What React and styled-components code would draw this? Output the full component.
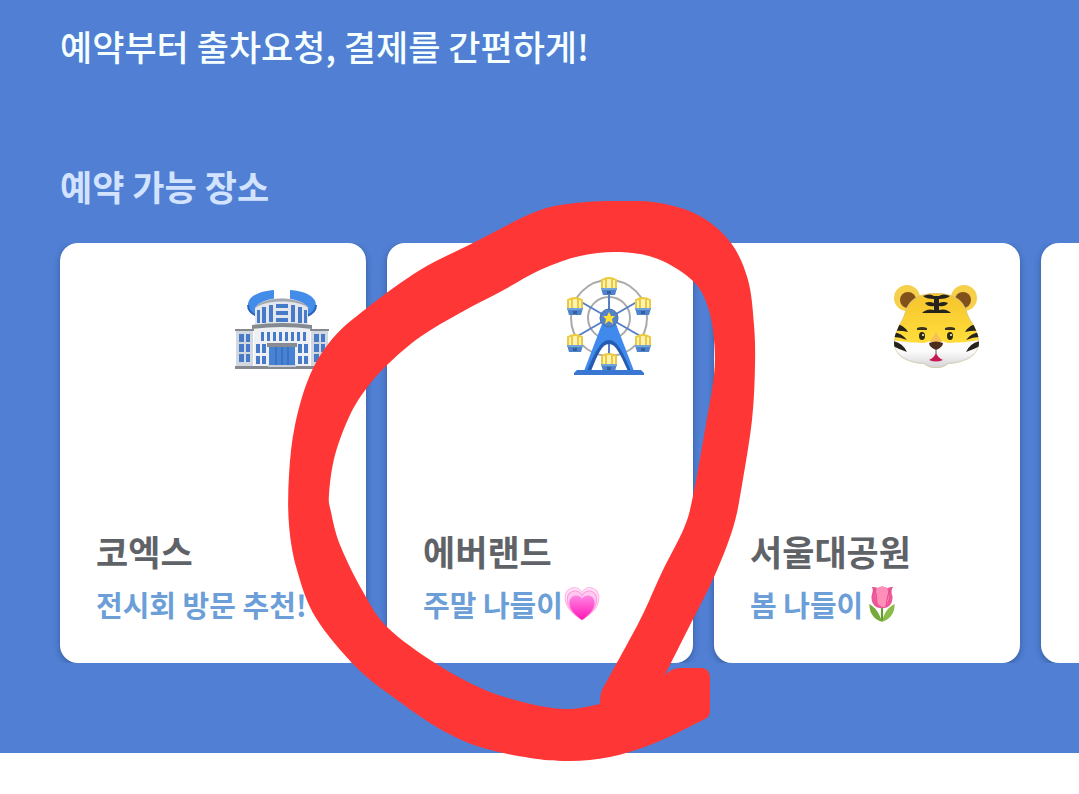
import React from "react";
import styled, { createGlobalStyle } from "styled-components";

const GlobalStyle = createGlobalStyle`
  *, *::before, *::after { box-sizing: border-box; }
  body {
    margin: 0;
    background: #ffffff;
    font-family: "Noto Sans CJK KR", "Noto Sans", sans-serif;
  }
`;

const Page = styled.main`
  position: relative;
  min-height: 100vh;
  overflow-x: clip;
`;

const Hero = styled.section`
  background: #507fd3;
  padding: 22px 0 90px;
`;

const Lead = styled.p`
  margin: 0;
  padding: 0 60px;
  font-size: 35px;
  line-height: 48px;
  font-weight: 500;
  color: #f5ffff;
`;

const Heading = styled.h2`
  margin: 92px 0 33px;
  padding: 0 60px;
  font-size: 35px;
  line-height: 48px;
  font-weight: 700;
  color: #d2e3ff;
`;

const CardList = styled.ul`
  display: flex;
  gap: 21px;
  margin: 0;
  padding: 0 0 0 60px;
  list-style: none;
  overflow: hidden;
`;

const CardItem = styled.li`
  flex: 0 0 306px;
`;

const Card = styled.a`
  display: flex;
  flex-direction: column;
  justify-content: space-between;
  min-height: 420px;
  padding: 34px 34px 35px 36px;
  border-radius: 18px;
  background: #ffffff;
  box-shadow: 0 2px 6px rgba(20, 40, 80, 0.4);
  text-decoration: none;
`;

const Picture = styled.svg`
  width: 100px;
  height: 100px;
  align-self: flex-end;
`;

const PlaceName = styled.strong`
  display: block;
  font-size: 35px;
  line-height: 58px;
  font-weight: 700;
  color: #5f6368;
  white-space: nowrap;
`;

const PlaceNote = styled.span`
  display: flex;
  align-items: center;
  font-size: 29px;
  line-height: 48px;
  font-weight: 700;
  color: #6c9fd8;
  white-space: nowrap;
`;

const Emoji = styled.svg`
  width: 38px;
  height: 38px;
`;

const Marker = styled.svg`
  position: absolute;
  top: 0;
  left: 0;
  width: 770px;
  height: 770px;
  pointer-events: none;
`;

function Building() {
  const wing = (x) => (
    <g key={x}>
      <rect x={x} y="53" width="17" height="38" fill="#d3d7df" />
      <rect x={x - 1} y="52" width="19" height="2" fill="#858a91" />
      {[57, 67, 77].map((y) => (
        <g key={y} fill="#477bc9">
          <rect x={x + 3} y={y} width="5" height="8" />
          <rect x={x + 10} y={y} width="4" height="8" />
        </g>
      ))}
      <rect x={x - 1} y="89" width="19" height="3" fill="#858a91" />
    </g>
  );
  return (
    <Picture viewBox="0 0 100 100" aria-hidden="true">
      <path d="M42 13C28 14 16 19 16 28c0 5 4 9 9 11l3-8 14-8z" fill="#438cea" />
      <path d="M58 13c14 1 26 6 26 15 0 5-4 9-9 11l-3-8-14-8z" fill="#438cea" />
      <path d="M16 28c0 5 4 9 9 11M84 28c0 5-4 9-9 11" fill="none" stroke="#2b63bb" strokeWidth="2" />
      <path d="M23 31c7-13 46-13 53 0v19H23z" fill="#e3e6ec" />
      <path d="M22 32c8-14 47-14 56 0-10-10-46-10-56 0z" fill="#a4a9b1" />
      <g fill="#477bc9">
        <rect x="25" y="33" width="3" height="13" />
        <rect x="30" y="30" width="4" height="16" />
        <rect x="37" y="28" width="4" height="17" />
        <rect x="44" y="27" width="12" height="4" />
        <rect x="44" y="34" width="12" height="4" />
        <rect x="44" y="41" width="12" height="4" />
        <rect x="59" y="28" width="4" height="17" />
        <rect x="66" y="30" width="4" height="16" />
        <rect x="72" y="33" width="3" height="13" />
      </g>
      {wing(4)}
      {wing(79)}
      <path d="M22 49q28-4 56 0v42H22z" fill="#eef0f4" />
      <path d="M20 48q30-4 60 0v4q-30-4-60 0z" fill="#858a91" />
      <g fill="#477bc9">
        {[29, 35, 41, 47, 53, 59, 65, 71].map((x) => (
          <rect key={x} x={x} y="55" width="3" height="9" />
        ))}
        {[24, 30, 66, 72].map((x) => (
          <g key={x}>
            <rect x={x} y="67" width="4" height="9" />
            <rect x={x} y="79" width="4" height="8" />
          </g>
        ))}
      </g>
      <rect x="35" y="66" width="30" height="4" fill="#868b94" />
      <rect x="37" y="70" width="26" height="19" fill="#4782d5" />
      <path d="M44 70v19M50 70v19M56 70v19" stroke="#2e62ad" strokeWidth="1" />
      <rect x="21" y="89" width="58" height="3" fill="#858a91" />
      <rect x="36" y="88" width="28" height="2" fill="#c9cdd4" />
    </Picture>
  );
}

function FerrisWheel() {
  const cabins = [[50, 10], [84, 30], [84, 67], [16, 30], [16, 67], [50, 86]];
  return (
    <Picture viewBox="0 0 100 100" aria-hidden="true">
      <g fill="none" stroke="#aaaaab" strokeWidth="2">
        <circle cx="50" cy="41" r="38" />
        <circle cx="50" cy="41" r="21" />
      </g>
      <path d="M50 4v78M17 22l66 38M17 60l66-38" stroke="#567fc5" strokeWidth="2" />
      {cabins.map(([x, y]) => (
        <g key={`${x}-${y}`} transform={`translate(${x} ${y})`}>
          <path d="M-7 1v-8q7-4 14 0v8z" fill="#fff3b4" />
          <path d="M-7 2v-9q7-4 14 0v9M-3 1v-9M3 1v-9" fill="none" stroke="#edca3d" strokeWidth="2" />
          <path d="M-8 1H8L6 8H-6z" fill="#4c83ca" />
          <path d="M-8 1H8v2H-8z" fill="#73a4d9" />
          <path d="M-2 4h4v3h-4z" fill="#365f9d" />
        </g>
      ))}
      <path d="M43 47h14l18 47h-6C64 77 58 65 50 65S36 77 31 94h-6z" fill="#418aed" />
      <path d="M28 94C36 75 42 63 50 63s14 12 22 31h-3C61 77 57 67 50 67S39 77 32 94z" fill="#245cb2" />
      <path d="M18 93h64l3 3v2H15v-2z" fill="#3977d3" />
      <circle cx="50" cy="41" r="9" fill="#5683c7" stroke="#416baa" />
      <path d="M50 35l2 4h4l-3 3 1 5-4-3-4 3 1-5-3-3h4z" fill="#ffe033" />
    </Picture>
  );
}

function Tiger() {
  const face =
    "M50 16c17 0 27 6 31 19 2 7 5 9 8 16 3 6 4 10 4 15 0 12-13 20-31 21-4 3-8 4-12 4s-8-1-12-4C20 86 8 78 8 66c0-5 1-9 4-15 3-7 5-9 7-16 4-13 14-19 31-19z";
  return (
    <Picture viewBox="0 0 100 100" aria-hidden="true">
      <defs>
        <linearGradient id="tiger-fur" x1="0" y1="0" x2="0" y2="1">
          <stop offset="0" stopColor="#f5c22c" />
          <stop offset=".6" stopColor="#ffdc3a" />
        </linearGradient>
        <linearGradient id="tiger-muzzle" x1="0" y1="0" x2="0" y2="1">
          <stop offset=".4" stopColor="#fbfbfb" />
          <stop offset="1" stopColor="#d0d0d4" />
        </linearGradient>
        <clipPath id="tiger-face">
          <path d={face} />
        </clipPath>
      </defs>
      <circle cx="21" cy="21" r="13" fill="#f6cf4b" />
      <circle cx="78" cy="21" r="13" fill="#f6cf4b" />
      <circle cx="22" cy="23" r="8" fill="#82501b" />
      <circle cx="77" cy="23" r="8" fill="#82501b" />
      <g clipPath="url(#tiger-face)">
        <rect x="5" y="14" width="90" height="78" fill="url(#tiger-fur)" />
        <path d="M5 63q17 3 33 3 12-5 24 0 16 0 33-3v29H5z" fill="url(#tiger-muzzle)" />
        <path d={face} fill="none" stroke="#c9c4b4" strokeOpacity=".5" strokeWidth="2" />
        <g fill="#25231b">
          <path d="M9 47q8 0 13 8-8-2-14-1zM7 55q9 1 14 8-8-3-14-3zM7 64q10 2 14 11-9-3-14-6zM92 47q-8 0-13 8 8-2 14-1zM94 55q-9 1-14 8 8-3 14-3zM94 64q-10 2-14 11 9-3 14-6z" />
          <path d="M37 19q7-3 11 0h5q4-3 11 0-3 3-11 3v4q5-2 9 0-3 4-9 3v4q7-2 12 3H36q5-5 12-3v-4q-6 1-9-3 4-2 9 0v-4q-8 0-11-3z" />
        </g>
      </g>
      <path d="M31 51q5-2 10 0v2H31zM59 51q5-2 10 0v2H59z" fill="#39321c" />
      <ellipse cx="36" cy="59" rx="3" ry="4" fill="#30270f" />
      <ellipse cx="64" cy="59" rx="3" ry="4" fill="#30270f" />
      <circle cx="37" cy="58" r="1" fill="#ffffff" />
      <circle cx="65" cy="58" r="1" fill="#ffffff" />
      <path d="M50 55q-4 6-6 10h12q-2-4-6-10z" fill="#f8c058" />
      <path d="M43 66q7-3 14 0 0 4-7 7-7-3-7-7z" fill="#4b2d1d" />
      <path d="M50 73v4" stroke="#696058" />
      <path d="M50 76q2 5 7 7-7 3-14 0 5-2 7-7z" fill="#c51955" />
    </Picture>
  );
}

function Heart() {
  return (
    <Emoji viewBox="0 0 36 36" role="img" aria-label="두근거리는 하트">
      <defs>
        <linearGradient id="heart-fill" x1="0" y1="0" x2="0" y2="1">
          <stop offset="0" stopColor="#ff86e2" />
          <stop offset="1" stopColor="#ff16b8" />
        </linearGradient>
      </defs>
      <path d="M18 33C11 28 2 22 2 12 2 2 14-1 18 7c4-8 16-5 16 5 0 10-9 16-16 21z" fill="#ffe0f6" stroke="#ffb5e8" />
      <path d="M18 33C12 29 4 23 4 14 4 5 14 3 18 10c4-7 14-5 14 4 0 9-8 15-14 19z" fill="#ffc8f0" stroke="#ff9ade" />
      <path d="M18 33C12 29 6 23 6 17c0-8 9-9 12-4 3-5 12-4 12 4 0 6-6 12-12 16z" fill="url(#heart-fill)" />
    </Emoji>
  );
}

function Tulip() {
  return (
    <Emoji viewBox="0 0 36 36" role="img" aria-label="튤립">
      <path d="M17 18h2v16h-2z" fill="#659a30" />
      <path d="M18 35C15 25 11 21 6 18c0 9 4 14 12 17z" fill="#74aa3b" />
      <path d="M18 35c2-9 6-14 12-17 0 9-4 14-12 17z" fill="#8bbc49" />
      <path d="M9 2q4 0 5 1 4-3 9 0 2-1 5-1-2 4 0 9 0 11-10 11T8 11q2-5 1-9z" fill="#ee5898" />
      <path d="M13 3q5-3 10 0 4 12-3 18-11-2-7-18z" fill="#ff8ebb" />
      <path d="M9 2q5 5 4 18M28 2q-5 4-6 18" fill="none" stroke="#e24d89" />
    </Emoji>
  );
}

const PLACES = [
  { name: "코엑스", note: "전시회 방문 추천!", Art: Building },
  { name: "에버랜드", note: "주말 나들이", Art: FerrisWheel, Mark: Heart },
  { name: "서울대공원", note: "봄 나들이", Art: Tiger, Mark: Tulip },
];

function PlaceCard({ name, note, Art, Mark }) {
  return (
    <CardItem>
      <Card href="#">
        <Art />
        <div>
          <PlaceName>{name}</PlaceName>
          <PlaceNote>
            {note}
            {Mark && <Mark />}
          </PlaceNote>
        </div>
      </Card>
    </CardItem>
  );
}

// Smooth curve through a list of points (Catmull-Rom turned into cubic Béziers).
function curve(points) {
  let d = "";
  for (let i = 0; i < points.length - 1; i += 1) {
    const a = points[Math.max(i - 1, 0)];
    const b = points[i];
    const c = points[i + 1];
    const e = points[Math.min(i + 2, points.length - 1)];
    d += `C${b[0] + (c[0] - a[0]) / 6} ${b[1] + (c[1] - a[1]) / 6} `;
    d += `${c[0] - (e[0] - b[0]) / 6} ${c[1] - (e[1] - b[1]) / 6} ${c[0]} ${c[1]}`;
  }
  return d;
}

const OUTER = [
  [705, 719], [655, 743], [610, 757], [570, 761], [530, 758], [480, 747], [440, 729],
  [400, 702], [357, 668], [316, 618], [297, 570], [289, 525], [289, 475], [295, 425],
  [310, 375], [333, 338], [367, 308], [420, 270], [473, 243], [535, 212], [575, 203],
  [620, 201], [660, 203], [700, 216], [731, 243], [748, 280], [754, 325], [755, 365],
  [752, 420], [742, 485], [733, 528], [714, 577], [690, 625], [665, 675],
];

const INNER = [
  [600, 704], [570, 709], [535, 705], [485, 690], [435, 663], [387, 627], [362, 590],
  [340, 545], [331, 512], [329, 494], [335, 455], [350, 415], [366, 389], [387, 365],
  [420, 337], [460, 313], [500, 292], [540, 270], [580, 256], [620, 252], [658, 259],
  [693, 281], [708, 307], [714, 340], [714, 375], [705, 430], [693, 496], [684, 528],
  [662, 572], [640, 620], [602, 690],
];

export default function App() {
  return (
    <Page>
      <GlobalStyle />
      <Hero>
        <Lead>예약부터 출차요청, 결제를 간편하게!</Lead>
        <Heading>예약 가능 장소</Heading>
        <CardList>
          {PLACES.map((place) => (
            <PlaceCard key={place.name} {...place} />
          ))}
          <CardItem>
            <Card href="#" aria-label="다음 장소" />
          </CardItem>
        </CardList>
      </Hero>
      <Marker viewBox="0 0 770 770" aria-hidden="true">
        <path
          fill="#ff3636"
          fillRule="evenodd"
          d={`M705 719${curve(OUTER)}Q672 668 680 668H702Q710 669 710 678V710Q710 717 705 719Z M600 704${curve(INNER)}Q600 695 600 704Z`}
        />
      </Marker>
    </Page>
  );
}
